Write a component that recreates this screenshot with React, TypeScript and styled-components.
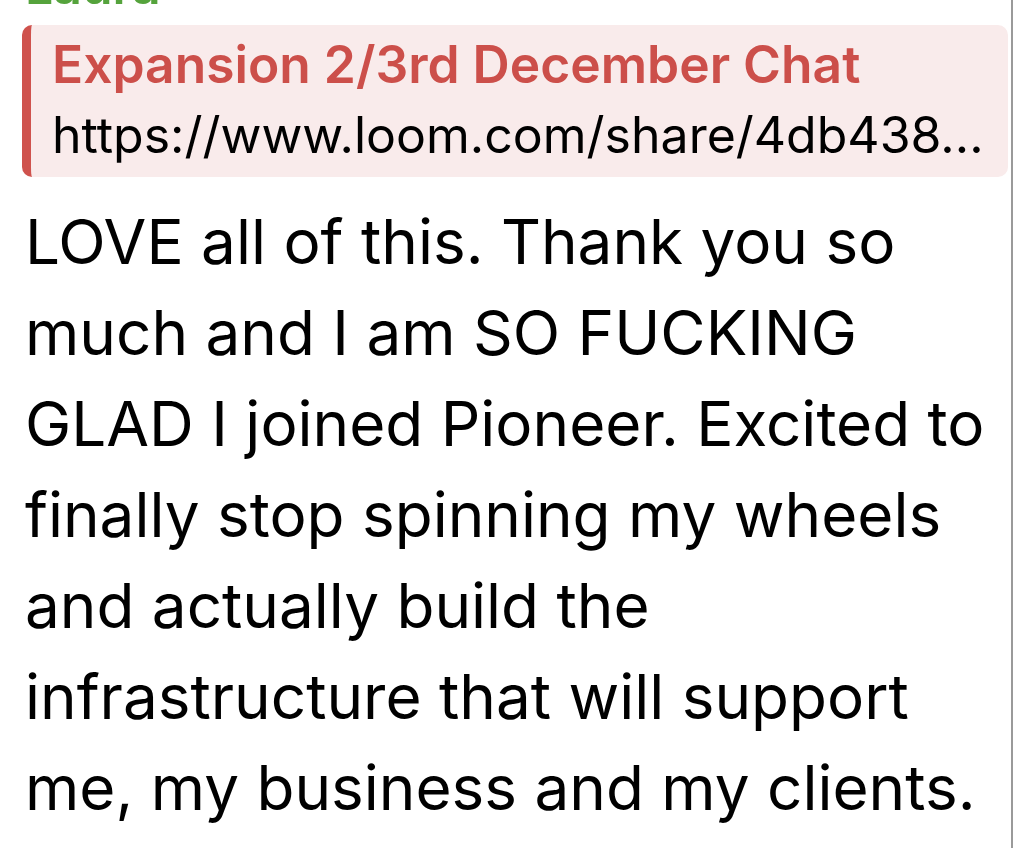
import React from "react";
import styled, { createGlobalStyle } from "styled-components";

const Global = createGlobalStyle`
  html, body { margin: 0; padding: 0; background: #ffffff; }
  body { font-family: Inter, "Noto Sans", "Liberation Sans", sans-serif; overflow: hidden; }
`;

const Page = styled.div`
  width: 1013px;
  height: 848px;
  box-sizing: border-box;
  border-right: 2px solid #9a9a9a;
  padding: 0 3px 0 22px;
  overflow: hidden;
  display: flex;
  flex-direction: column;
`;

const Sender = styled.div`
  margin-top: -44px;
  padding-left: 3px;
  color: #55a33c;
  font-weight: 600;
  font-size: 50px;
  line-height: 60px;
  flex-shrink: 0;
`;

const Quote = styled.div`
  margin-top: 9px;
  height: 152px;
  flex-shrink: 0;
  box-sizing: border-box;
  background: #f9ebeb;
  border-left: 9px solid #cf524d;
  border-radius: 10px;
  padding: 12px 16px 0 21px;
  display: flex;
  flex-direction: column;
`;

const QuoteTitle = styled.div`
  color: #cc4f4a;
  font-weight: 600;
  font-size: 51.5px;
  line-height: 54px;
  white-space: nowrap;
`;

const QuoteLink = styled.div`
  margin-top: 14px;
  color: #000;
  font-size: 50px;
  line-height: 60px;
  white-space: nowrap;
  overflow: hidden;
`;

const Message = styled.p`
  margin: 19px 0 0 3px;
  color: #000;
  font-size: 62px;
  line-height: 91px;
`;

export default function App() {
  return (
    <>
      <Global />
      <Page>
        <Sender>Laura</Sender>
        <Quote>
          <QuoteTitle>Expansion 2/3rd December Chat</QuoteTitle>
          <QuoteLink>https://www.loom.com/share/4db438...</QuoteLink>
        </Quote>
        <Message>
          LOVE all of this. Thank you so much and I am SO FUCKING GLAD I joined
          Pioneer. Excited to finally stop spinning my wheels and actually build
          the infrastructure that will support me, my business and my clients.
        </Message>
      </Page>
    </>
  );
}
